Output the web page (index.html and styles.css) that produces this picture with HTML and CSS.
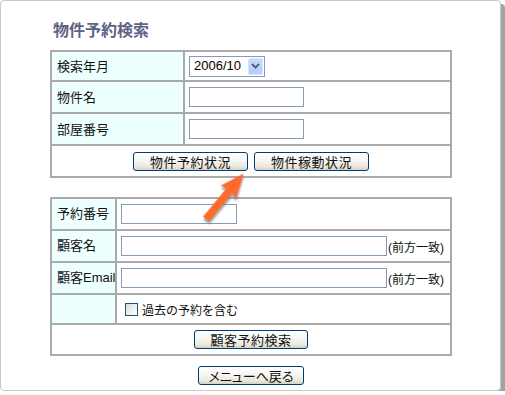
FILE: index.html
```html
<!DOCTYPE html>
<html lang="ja">
<head>
<meta charset="utf-8">
<title>物件予約検索</title>
<link rel="stylesheet" href="styles.css">
</head>
<body>
<div class="frame">
  <h1 class="title">物件予約検索</h1>

  <div class="grid grid-a">
    <div class="lbl">検索年月</div>
    <div class="val">
      <span class="select"><span class="select-text">2006/10</span><span class="select-btn"><svg width="9" height="6" viewBox="0 0 9 6"><path d="M1 1 L4.5 4.5 L8 1" fill="none" stroke="#4d6185" stroke-width="2"/></svg></span></span>
    </div>
    <div class="lbl">物件名</div>
    <div class="val"><span class="input w115"></span></div>
    <div class="lbl">部屋番号</div>
    <div class="val"><span class="input w115"></span></div>
    <div class="val full btns">
      <span class="btn w115">物件予約状況</span>
      <span class="btn w115">物件稼動状況</span>
    </div>
  </div>

  <div class="grid grid-b">
    <div class="lbl">予約番号</div>
    <div class="val"><span class="input w116"></span></div>
    <div class="lbl">顧客名</div>
    <div class="val"><span class="input w266"></span><span class="note">(前方一致)</span></div>
    <div class="lbl">顧客Email</div>
    <div class="val"><span class="input w266"></span><span class="note">(前方一致)</span></div>
    <div class="lbl"></div>
    <div class="val"><span class="check"></span><span class="check-text">過去の予約を含む</span></div>
    <div class="val full btns">
      <span class="btn w114">顧客予約検索</span>
    </div>
  </div>

  <div class="menu-row">
    <span class="btn w106 palt">メニューへ戻る</span>
  </div>

  <svg class="arrow" width="505" height="395" viewBox="0 0 505 395">
    <defs>
      <filter id="sh" x="-50%" y="-50%" width="200%" height="200%">
        <feDropShadow dx="-2" dy="2" stdDeviation="1.3" flood-color="#7a7a7a" flood-opacity="0.8"/>
      </filter>
    </defs>
    <g transform="translate(206,219) rotate(-50.4)">
      <polygon filter="url(#sh)" fill="#ff6a2c" points="0,-3.8 37,-3.8 35,-10 59,0 35,10 37,3.8 0,3.8"/>
    </g>
  </svg>
</div>
</body>
</html>
```

FILE: styles.css
```css
html, body {
  margin: 0;
  padding: 0;
  background: #fff;
}

body {
  font-family: "Liberation Sans", "Noto Sans CJK JP", sans-serif;
  font-size: 13px;
  color: #111;
}

.frame {
  position: relative;
  box-sizing: border-box;
  width: 501px;
  height: 391px;
  border: 1px solid #c8c8c8;
  border-radius: 4px;
  box-shadow: 4px 4px 0 #a3a3a3;
  padding: 17px 0 0 49px;
  background: #fff;
}

.title {
  margin: 0 0 10px 3px;
  font-family: "Noto Sans CJK JP", sans-serif;
  font-size: 16px;
  line-height: 22px;
  font-weight: bold;
  color: #5e6384;
}

.grid {
  display: grid;
  width: 402px;
  box-sizing: border-box;
  padding: 2px;
  gap: 2px;
  background: #aaaaaa;
}

.grid-a {
  grid-template-columns: 131px 1fr;
  grid-template-rows: 28px 30px 30px 30px;
}

.grid-b {
  margin-top: 19px;
  grid-template-columns: 63px 1fr;
  grid-template-rows: 30px 30px 30px 28px 29px;
}

.lbl {
  background: #eeffff;
  display: flex;
  align-items: center;
  padding-left: 5px;
  font-family: "Noto Sans CJK JP", sans-serif;
  font-size: 13px;
  line-height: 16px;
  color: #111;
  white-space: nowrap;
}

.grid-b .lbl {
  font-family: "Liberation Sans", "Noto Sans CJK JP", sans-serif;
}

.val {
  background: #fff;
  display: flex;
  align-items: center;
  padding-left: 4px;
}

.full {
  grid-column: 1 / 3;
}

.btns {
  justify-content: center;
  gap: 6px;
  padding-left: 0;
}

.select {
  display: flex;
  align-items: center;
  box-sizing: border-box;
  width: 76px;
  height: 21px;
  border: 1px solid #7f9db9;
  background: #fff;
  padding: 1px;
}

.select-text {
  flex: 1;
  padding-left: 3px;
  font-family: "Liberation Sans", sans-serif;
  font-size: 13px;
  line-height: 16px;
  color: #000;
}

.select-btn {
  display: flex;
  align-items: center;
  justify-content: center;
  width: 15px;
  height: 17px;
  box-sizing: border-box;
  background: linear-gradient(180deg, #cbdafc 0%, #b7cbf8 100%);
  border: 1px solid #d8e4fd;
  border-radius: 2px;
}

.input {
  display: inline-block;
  box-sizing: border-box;
  height: 20px;
  border: 1px solid #7f9db9;
  background: #fff;
}

.w115 { width: 115px; }
.w116 { width: 116px; }
.w266 { width: 266px; }
.w114 { width: 114px; }
.w106 { width: 106px; }

.note {
  font-family: "Liberation Sans", "Noto Sans CJK JP", sans-serif;
  font-size: 12px;
  color: #111;
  margin-left: 1px;
}

.check {
  display: inline-block;
  box-sizing: border-box;
  width: 13px;
  height: 13px;
  margin-left: 4px;
  border: 1px solid #1c5180;
  background: linear-gradient(135deg, #dcdcd5 0%, #f2f2ee 60%, #ffffff 100%);
}

.check-text {
  margin-left: 4px;
  font-family: "Noto Sans CJK JP", sans-serif;
  font-size: 12px;
  color: #111;
}

.btn {
  display: inline-flex;
  align-items: center;
  justify-content: center;
  box-sizing: border-box;
  height: 19px;
  border: 1px solid #003c74;
  border-radius: 3px;
  background: linear-gradient(180deg, #ffffff 0%, #f6f6f2 45%, #ebe8dd 80%, #d6d0c5 100%);
  font-family: "Noto Sans CJK JP", sans-serif;
  font-size: 13px;
  line-height: 15px;
  color: #111;
  letter-spacing: 0.5px;
  white-space: nowrap;
}

.palt {
  font-feature-settings: "palt";
  letter-spacing: 0;
}

.menu-row {
  width: 402px;
  display: flex;
  justify-content: center;
  margin-top: 10px;
}

.arrow {
  position: absolute;
  left: -1px;
  top: -1px;
  pointer-events: none;
}
```
